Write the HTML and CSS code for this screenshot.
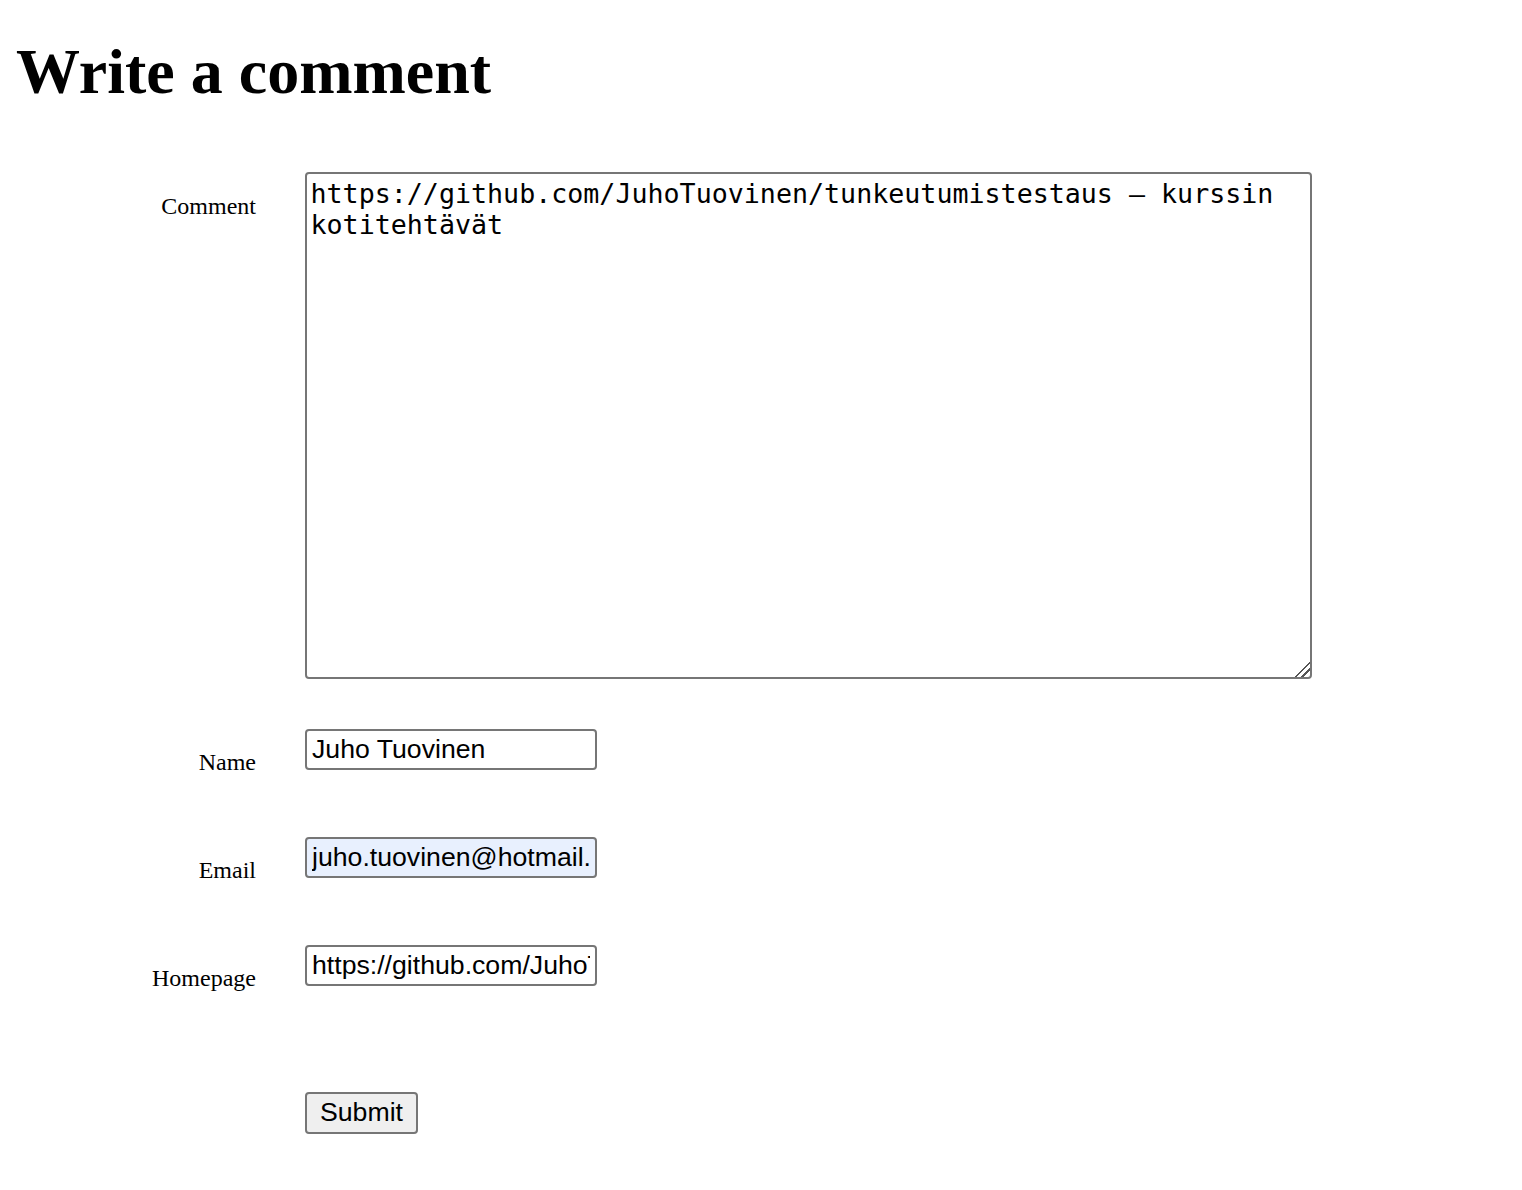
FILE: index.html
```html
<!DOCTYPE html>
<html lang="en">
<head>
<meta charset="utf-8">
<title>Write a comment</title>
<link rel="stylesheet" href="styles.css">
</head>
<body>
<h1 class="title">Write a comment</h1>
<form class="comment-form">
  <div class="row row-area">
    <label class="label" for="comment">Comment</label>
    <textarea id="comment" class="area">https://github.com/JuhoTuovinen/tunkeutumistestaus – kurssin kotitehtävät</textarea>
  </div>
  <div class="row row-input">
    <label class="label" for="name">Name</label>
    <input id="name" class="field" type="text" value="Juho Tuovinen">
  </div>
  <div class="row row-input">
    <label class="label" for="email">Email</label>
    <input id="email" class="field field-autofill" type="text" value="juho.tuovinen@hotmail.com">
  </div>
  <div class="row row-input">
    <label class="label" for="homepage">Homepage</label>
    <input id="homepage" class="field" type="text" value="https://github.com/JuhoTuovinen">
  </div>
  <div class="row row-submit">
    <span class="label"></span>
    <button type="button" class="submit">Submit</button>
  </div>
</form>
</body>
</html>
```
FILE: styles.css
```css
html, body {
  margin: 0;
  padding: 0;
  background: #ffffff;
  color: #000000;
}

body {
  padding-left: 16px;
  font-family: "Liberation Serif", "Times New Roman", serif;
}

.title {
  margin: 35px 0 0;
  font-size: 64px;
  line-height: 73.6px;
  font-weight: bold;
}

.comment-form {
  margin-top: 63px;
  display: flex;
  flex-direction: column;
}

.row {
  display: flex;
  align-items: flex-start;
  gap: 49px;
  margin-bottom: 50px;
}

.row-input {
  min-height: 58px;
}

.row-submit {
  padding-top: 39px;
  margin-bottom: 0;
}

.label {
  flex: 0 0 240px;
  width: 240px;
  text-align: right;
  font-size: 24px;
  line-height: 27px;
  padding-top: 21px;
}

.row-input .label {
  padding-top: 20px;
}

.area {
  box-sizing: border-box;
  width: 1007px;
  height: 507px;
  margin: 0 0 0 -0.5px;
  padding: 4px;
  border: 2px solid #767676;
  border-radius: 4px;
  font-family: "DejaVu Sans Mono", monospace;
  font-size: 26.67px;
  line-height: normal;
  color: #000;
  background: #fff;
  resize: both;
}

.area::-webkit-resizer {
  background: linear-gradient(135deg,
    transparent 0 47%,
    #555555 47% 56%,
    transparent 56% 69%,
    #555555 69% 78%,
    transparent 78%);
}

.field {
  box-sizing: border-box;
  width: 292px;
  height: 41px;
  margin: 0;
  padding: 2px 5px;
  border: 2px solid #767676;
  border-radius: 4px;
  font-family: "Liberation Sans", Arial, sans-serif;
  font-size: 26.67px;
  color: #000;
  background: #fff;
}

.field-autofill {
  background: #e8f0fe;
}

.submit {
  box-sizing: border-box;
  height: 42px;
  margin: 0;
  padding: 2px 13px;
  border: 2px solid #767676;
  border-radius: 4px;
  background: #efefef;
  font-family: "Liberation Sans", Arial, sans-serif;
  font-size: 26.67px;
  color: #000;
}
```
